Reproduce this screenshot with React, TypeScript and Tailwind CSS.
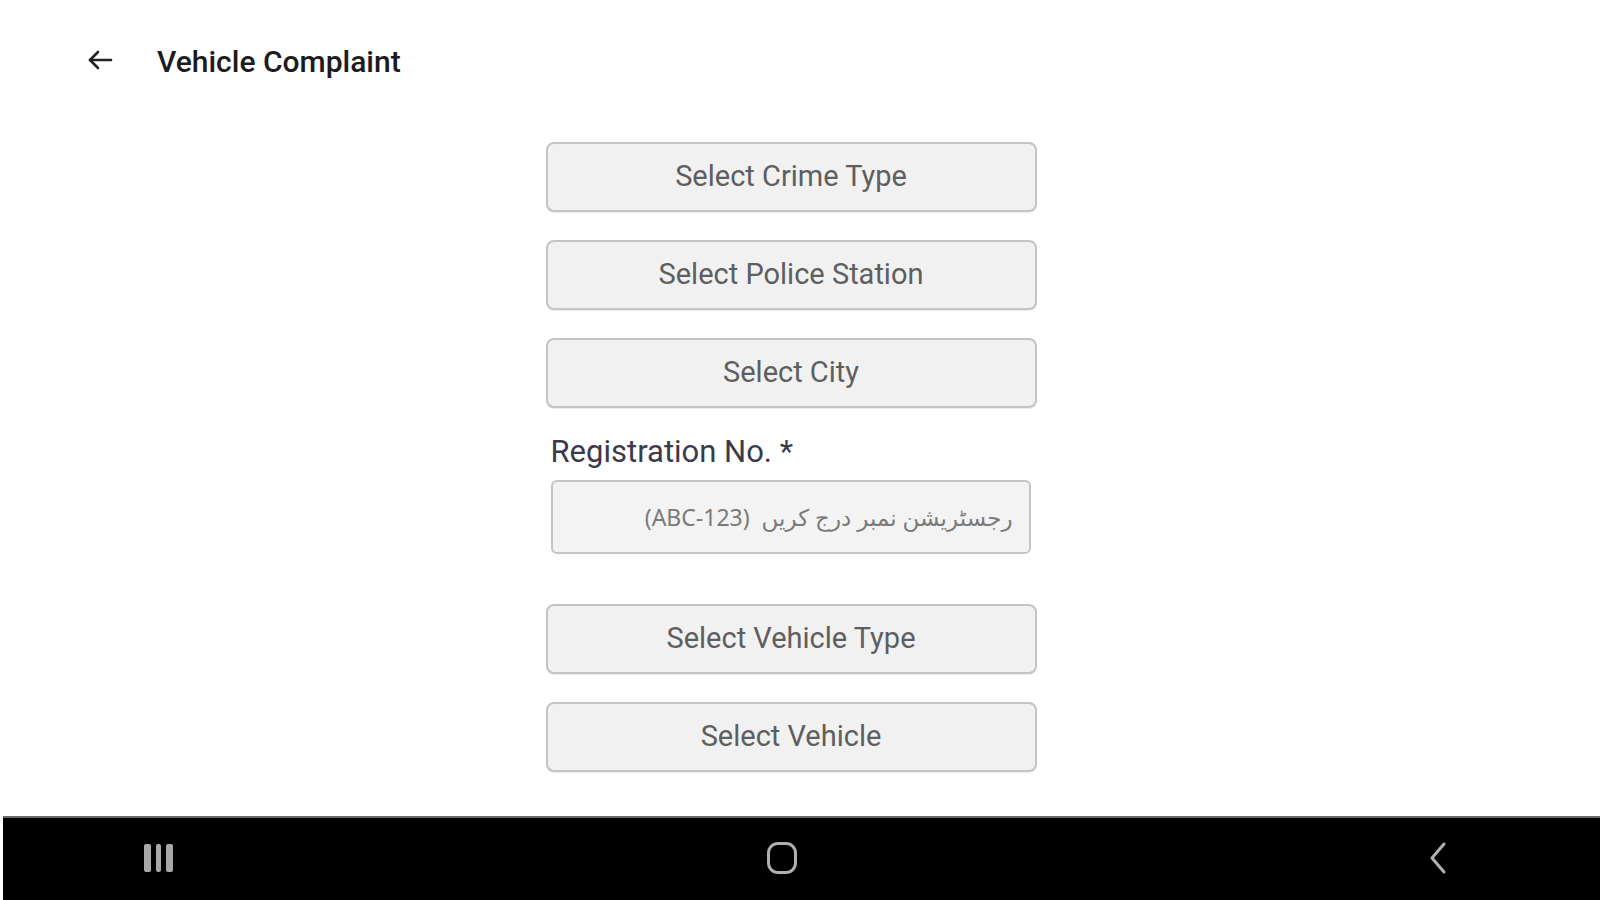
import React from 'react'

const FONT = { fontFamily: 'Roboto, "Noto Sans", "DejaVu Sans", sans-serif' }

function SelectButton({ label }: { label: string }) {
  return (
    <button className="w-[491px] h-[70px] rounded-[8px] border-2 border-[#c4c4c4] bg-[#f1f1f1] text-[29px] text-[#5e5e5e] shadow-[0_1px_1px_rgba(0,0,0,0.08)]">
      {label}
    </button>
  )
}

function BackArrow() {
  return (
    <svg width="26" height="22" viewBox="0 0 26 22" fill="none" stroke="#222" strokeWidth="2.6" strokeLinecap="round" strokeLinejoin="round">
      <path d="M24 11H3" />
      <path d="M11 3L3 11l8 8" />
    </svg>
  )
}

export default function App() {
  return (
    <div className="w-[1600px] h-[900px] bg-white flex flex-col overflow-hidden" style={FONT}>
      {/* top bar */}
      <div className="h-[124px] flex items-start pt-[49px] pl-[87px]">
        <BackArrow />
        <span className="ml-[44px] -mt-[10px] text-[30px] font-medium text-[#1c1c1c]">Vehicle Complaint</span>
      </div>

      {/* form */}
      <div className="flex-1 flex flex-col items-center pt-[18px] pr-[18px]">
        <div className="w-[491px] flex flex-col">
          <div className="flex flex-col gap-[28px]">
            <SelectButton label="Select Crime Type" />
            <SelectButton label="Select Police Station" />
            <SelectButton label="Select City" />
          </div>

          <div className="mt-[26px] pl-[5px] flex flex-col">
            <label className="text-[31px] leading-[36px] text-[#3a3a4a]">Registration No. *</label>
            <div className="mt-[10px] w-[480px] h-[74px] rounded-[6px] border-2 border-[#c4c4c4] bg-[#f3f3f3] flex items-center justify-end pr-[16px]">
              <span
                dir="rtl"
                className="text-[23px] text-[#7a7a7a] whitespace-pre"
                style={{ fontFamily: '"Noto Sans", "DejaVu Sans", sans-serif' }}
              >
                {'رجسٹریشن نمبر درج کریں  (ABC-123)'}
              </span>
            </div>
          </div>

          <div className="mt-[50px] flex flex-col gap-[28px]">
            <SelectButton label="Select Vehicle Type" />
            <SelectButton label="Select Vehicle" />
          </div>
        </div>
      </div>

      {/* system navigation bar */}
      <div className="h-[84px] ml-[3px] bg-black border-t-2 border-[#6a6a6a] flex items-center">
        <div className="w-[310px] flex justify-center">
          <div className="flex gap-[5px] h-[28px] -mt-[2px]">
            <div className="w-[7px] h-full rounded-[2px] bg-[#a8a8a8]" />
            <div className="w-[5px] h-full rounded-[2px] bg-[#a8a8a8]" />
            <div className="w-[7px] h-full rounded-[2px] bg-[#a8a8a8]" />
          </div>
        </div>
        <div className="flex-1 flex justify-center">
          <div className="w-[30px] h-[32px] rounded-[11px] border-[3px] border-[#b0b0b0] -ml-[40px] -mt-[2px]" />
        </div>
        <div className="w-[310px] flex justify-center">
          <svg width="20" height="34" viewBox="0 0 20 34" fill="none" stroke="#b0b0b0" strokeWidth="3" strokeLinecap="round" strokeLinejoin="round" className="-ml-[14px] -mt-[2px]">
            <path d="M16 3L4 17l12 14" />
          </svg>
        </div>
      </div>
    </div>
  )
}
